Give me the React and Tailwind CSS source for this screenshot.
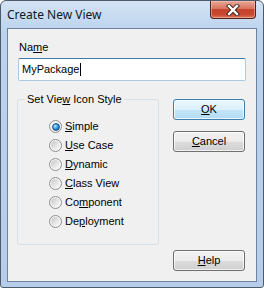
import React from 'react';

// Win7 style radio button
function Radio({ checked = false, children }) {
  return (
    <div className="flex h-[19px] items-center gap-[3px]">
      <span className="flex h-[13px] w-[13px] items-center justify-center rounded-full border border-[#8e8f8f] bg-[#f6f6f6]">
        {checked ? (
          <span className="h-[8px] w-[8px] rounded-full border border-[#1c5180] bg-[radial-gradient(circle_at_35%_35%,#b8e6ff_0%,#4aa6e6_40%,#1463a8_80%,#0d4a85_100%)]" />
        ) : (
          <span className="h-[9px] w-[9px] rounded-full bg-[linear-gradient(135deg,#c4c4c4,#e6e6e6_55%,#fbfbfb)]" />
        )}
      </span>
      <span>{children}</span>
    </div>
  );
}

function Button({ primary = false, className = '', children }) {
  return (
    <button
      className={`flex h-[21px] w-[72px] items-center justify-center rounded-[3px] border ${
        primary
          ? 'border-[#3c7fb1] bg-[linear-gradient(#ebf6fd_0%,#dcf0fc_50%,#c4e5f8_51%,#b4dcf4_100%)]'
          : 'border-[#707070] bg-[linear-gradient(#f2f2f2_0%,#ebebeb_50%,#dddddd_51%,#cfcfcf_100%)]'
      } shadow-[inset_0_0_0_1px_rgba(255,255,255,0.7)] ${className}`}
    >
      {children}
    </button>
  );
}

export default function App() {
  return (
    <div className="flex h-[288px] w-[264px] flex-col rounded-t-[6px] rounded-b-[3px] border border-[#4e5b6b] bg-[linear-gradient(#d4e3f4,#bcd3ee_30px,#b5cdea)] font-['Liberation_Sans',Arial,sans-serif] text-[11px] leading-[13px] text-black">
      {/* Title bar */}
      <div className="flex h-[27px] shrink-0 items-start justify-between pl-[6px] pr-[7px]">
        <span className="mt-[6px] font-['Noto_Sans',sans-serif] text-[12px] leading-[16px] text-[#0b1a2c]">
          Create New View
        </span>
        <div className="flex h-[18px] w-[46px] items-center justify-center rounded-b-[4px] border border-t-0 border-[#54211a] bg-[linear-gradient(#e9a896_0%,#d9745f_45%,#c4442c_50%,#c8492f_80%,#d9785c_100%)] shadow-[inset_0_0_0_1px_rgba(255,210,200,0.45)]">
          <svg width="14" height="12" viewBox="0 0 14 12">
            <path d="M3 2 L11 10 M11 2 L3 10" stroke="#3b2420" strokeWidth="4.2" strokeLinecap="square" />
            <path d="M3 2 L11 10 M11 2 L3 10" stroke="#ffffff" strokeWidth="2.4" strokeLinecap="square" />
          </svg>
        </div>
      </div>

      {/* Client area */}
      <div className="mx-[6px] mb-[5px] flex flex-1 flex-col border border-[#6f83a0] bg-[#f0f0f0] pb-[10px]">
        <div className="pl-[11px] pt-[12px]">
          Na<span className="underline">m</span>e
        </div>
        <div className="ml-[10px] mt-[4px] flex h-[23px] w-[228px] items-center rounded-[2px] border border-[#a9cbe6] border-t-[#3d7bad] bg-white pl-[3px]">
          MyPackage
          <span className="ml-px h-[13px] w-px bg-black" />
        </div>

        <div className="mt-[12px] flex flex-1">
          <fieldset className="ml-[9px] h-[152px] w-[142px] rounded-[3px] border border-[#d5dfe5]">
            <legend className="ml-[7px] px-[2px]">
              Set Vie<span className="underline">w</span> Icon Style
            </legend>
            <div className="pl-[31px] pt-[11px]">
              <Radio checked>
                <span className="underline">S</span>imple
              </Radio>
              <Radio>
                <span className="underline">U</span>se Case
              </Radio>
              <Radio>
                <span className="underline">D</span>ynamic
              </Radio>
              <Radio>
                <span className="underline">C</span>lass View
              </Radio>
              <Radio>
                Co<span className="underline">m</span>ponent
              </Radio>
              <Radio>
                De<span className="underline">p</span>loyment
              </Radio>
            </div>
          </fieldset>

          <div className="ml-[14px] flex flex-col pt-[6px]">
            <Button primary>
              <span className="underline">O</span>K
            </Button>
            <Button className="mt-[11px]">
              <span className="underline">C</span>ancel
            </Button>
            <Button className="mt-auto">
              <span className="underline">H</span>elp
            </Button>
          </div>
        </div>
      </div>
    </div>
  );
}
